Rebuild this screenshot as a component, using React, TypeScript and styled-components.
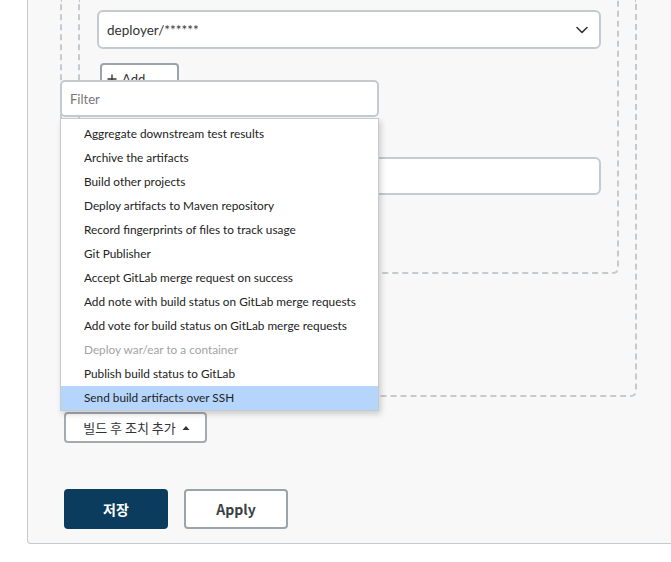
import React from "react";
import styled, { createGlobalStyle } from "styled-components";

const GlobalStyle = createGlobalStyle`
  html, body {
    margin: 0;
    padding: 0;
    background: #ffffff;
    font-family: Lato, "Noto Sans CJK KR", sans-serif;
    color: #333;
  }
  #root {
    overflow: hidden;
    height: 562px;
  }
`;

const borderColor = "#c3cbd0";

const Page = styled.div`
  position: relative;
  height: 562px;
  overflow: hidden;
`;

const Panel = styled.div`
  margin-left: 27px;
  width: 641px;
  background: #f8f8f8;
  border: 1px solid ${borderColor};
  border-top: none;
  border-radius: 0 0 4px 4px;
  padding: 0 0 14px 32px;
`;

const DashedBox = styled.div<{ $inset?: boolean }>`
  border: 2px dashed ${borderColor};
  border-top: none;
  border-radius: 0 0 6px 6px;
  margin: ${(p) => (p.$inset ? "0 16px" : "0")};
  padding: ${(p) => (p.$inset ? "10px 16px 77px 17px" : "0 0 121px 0")};
  width: ${(p) => (p.$inset ? "auto" : "573px")};
`;

const SelectBox = styled.div`
  height: 35px;
  background: #fff;
  border: 2px solid ${borderColor};
  border-radius: 6px;
  display: flex;
  align-items: center;
  justify-content: space-between;
  padding: 0 10px 0 8px;
  font-size: 13.5px;
  color: #333;
`;

const AddButton = styled.button`
  margin: 14px 0 0 3px;
  height: 32px;
  width: 79px;
  background: #fff;
  border: 2px solid #9aa4ab;
  border-radius: 4px;
  display: flex;
  align-items: center;
  gap: 5px;
  padding: 0 0 0 5px;
  font-family: Lato, sans-serif;
  font-size: 13px;
  color: #333;
`;

const TextField = styled.div`
  margin-top: 62px;
  height: 34px;
  background: #fff;
  border: 2px solid ${borderColor};
  border-radius: 6px;
`;

const Actions = styled.div`
  padding-left: 4px;
`;

const PostBuildButton = styled.button`
  margin-top: 15px;
  height: 31px;
  width: 143px;
  background: #fff;
  border: 2px solid #a3abb1;
  border-radius: 4px;
  display: flex;
  align-items: center;
  justify-content: center;
  gap: 6px;
  font-family: "Noto Sans CJK KR", sans-serif;
  font-size: 13px;
  color: #333;
  padding: 0 0 0 2px;
`;

const ButtonRow = styled.div`
  margin-top: 46px;
  display: flex;
  gap: 16px;
`;

const FormButton = styled.button<{ $primary?: boolean }>`
  width: 104px;
  height: 40px;
  border-radius: 4px;
  border: 2px solid ${(p) => (p.$primary ? "#0b3c5e" : "#9aa4ab")};
  background: ${(p) => (p.$primary ? "#0b3c5e" : "#ffffff")};
  color: ${(p) => (p.$primary ? "#ffffff" : "#3a3f44")};
  font-family: "Noto Sans CJK KR", sans-serif;
  font-size: 14px;
  font-weight: 700;
  padding: 0;
`;

const Dropdown = styled.div`
  position: absolute;
  left: 60px;
  top: 80px;
  width: 319px;
`;

const FilterInput = styled.div`
  height: 33px;
  background: #fff;
  border: 2px solid ${borderColor};
  border-radius: 5px;
  display: flex;
  align-items: center;
  padding-left: 8px;
  font-size: 13px;
  color: #777;
`;

const List = styled.ul`
  list-style: none;
  margin: 1px 0 0;
  padding: 3px 0 0;
  background: #fff;
  border: 1px solid ${borderColor};
  box-shadow: 2px 3px 6px rgba(0, 0, 0, 0.18);
`;

const Item = styled.li<{ $disabled?: boolean; $active?: boolean }>`
  height: 24px;
  line-height: 24px;
  padding-left: 23px;
  font-size: 11.8px;
  color: ${(p) => (p.$disabled ? "#a3a3a3" : "#222")};
  background: ${(p) => (p.$active ? "#b5d5fd" : "transparent")};
  white-space: nowrap;
`;

const items: { label: string; disabled?: boolean; active?: boolean }[] = [
  { label: "Aggregate downstream test results" },
  { label: "Archive the artifacts" },
  { label: "Build other projects" },
  { label: "Deploy artifacts to Maven repository" },
  { label: "Record fingerprints of files to track usage" },
  { label: "Git Publisher" },
  { label: "Accept GitLab merge request on success" },
  { label: "Add note with build status on GitLab merge requests" },
  { label: "Add vote for build status on GitLab merge requests" },
  { label: "Deploy war/ear to a container", disabled: true },
  { label: "Publish build status to GitLab" },
  { label: "Send build artifacts over SSH", active: true },
];

const Chevron = () => (
  <svg width="14" height="14" viewBox="0 0 14 14" fill="none">
    <path d="M2 4.5 L7 9.5 L12 4.5" stroke="#333" strokeWidth="1.6" strokeLinecap="round" strokeLinejoin="round" />
  </svg>
);

const Plus = () => (
  <svg width="10" height="10" viewBox="0 0 10 10">
    <path d="M5 0.5 V9.5 M0.5 5 H9.5" stroke="#333" strokeWidth="1.4" />
  </svg>
);

const Caret = () => (
  <svg width="8" height="6" viewBox="0 0 8 6">
    <path d="M0.5 5 L4 1 L7.5 5 Z" fill="#333" />
  </svg>
);

export default function App() {
  return (
    <Page>
      <GlobalStyle />
      <Panel>
        <DashedBox>
          <DashedBox $inset>
            <SelectBox>
              <span>deployer/******</span>
              <Chevron />
            </SelectBox>
            <AddButton>
              <Plus />
              Add
            </AddButton>
            <TextField />
          </DashedBox>
        </DashedBox>
        <Actions>
          <PostBuildButton>
            빌드 후 조치 추가
            <Caret />
          </PostBuildButton>
          <ButtonRow>
            <FormButton $primary>저장</FormButton>
            <FormButton>Apply</FormButton>
          </ButtonRow>
        </Actions>
      </Panel>
      <Dropdown>
        <FilterInput>Filter</FilterInput>
        <List>
          {items.map((it) => (
            <Item key={it.label} $disabled={it.disabled} $active={it.active}>
              {it.label}
            </Item>
          ))}
        </List>
      </Dropdown>
    </Page>
  );
}
